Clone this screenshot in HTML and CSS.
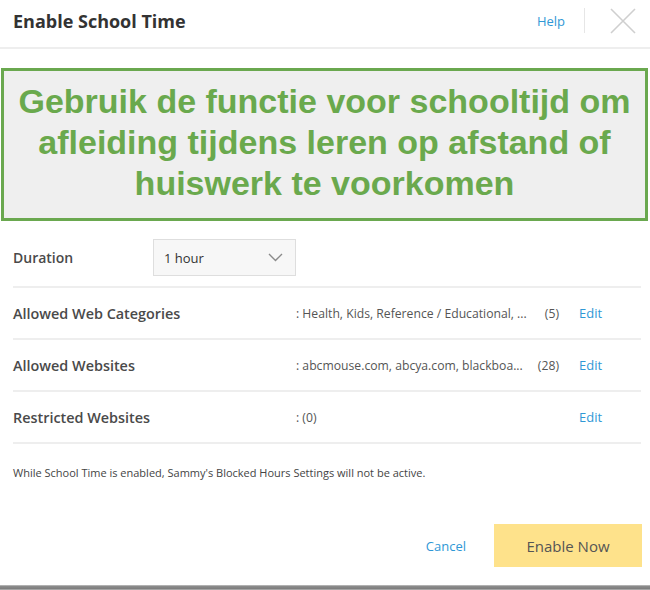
FILE: index.html
```html
<!DOCTYPE html>
<html lang="en">
<head>
    <meta charset="UTF-8">
    <meta name="viewport" content="width=device-width, initial-scale=1.0">
    <title>Enable School Time</title>
    <link rel="stylesheet" href="styles.css">
</head>
<body>
    <div class="dialog">
        <div class="dialog-header">
            <h1>Enable School Time</h1>
            <div class="header-actions">
                <a class="help" href="#">Help</a>
                <span class="sep"></span>
                <span class="close">
                    <svg width="26" height="26" viewBox="0 0 26 26"><path d="M1 1 L25 25 M25 1 L1 25" stroke="#cfcfcf" stroke-width="1.6" fill="none"/></svg>
                </span>
            </div>
        </div>

        <div class="callout">Gebruik de functie voor schooltijd om afleiding tijdens leren op afstand of huiswerk te voorkomen</div>

        <div class="settings">
            <div class="row duration-row">
                <span class="label">Duration</span>
                <div class="select">
                    <span>1 hour</span>
                    <svg width="15" height="9" viewBox="0 0 15 9"><path d="M1 1 L7.5 7.5 L14 1" stroke="#8a8a8a" stroke-width="1.4" fill="none"/></svg>
                </div>
            </div>
            <div class="row">
                <span class="label">Allowed Web Categories</span>
                <div class="value"><span>: Health, Kids, Reference / Educational, ...</span><span class="count">(5)</span></div>
                <a class="edit" href="#">Edit</a>
            </div>
            <div class="row">
                <span class="label">Allowed Websites</span>
                <div class="value"><span>: abcmouse.com, abcya.com, blackboa...</span><span class="count">(28)</span></div>
                <a class="edit" href="#">Edit</a>
            </div>
            <div class="row">
                <span class="label">Restricted Websites</span>
                <div class="value"><span>: (0)</span></div>
                <a class="edit" href="#">Edit</a>
            </div>
        </div>

        <p class="note">While School Time is enabled, Sammy's Blocked Hours Settings will not be active.</p>

        <div class="footer">
            <a class="cancel" href="#">Cancel</a>
            <div class="button">Enable Now</div>
        </div>
        <div class="bottom-bar"></div>
    </div>
</body>
</html>
```

FILE: styles.css
```css
body {
    font-family: "Open Sans", Arial, sans-serif;
    margin: 0;
    padding: 0;
    background: white;
    color: #444;
}
a {
    text-decoration: none;
    color: #2f98d6;
}
.dialog {
    width: 650px;
    height: 590px;
    overflow: hidden;
}
.dialog-header {
    height: 47px;
    border-bottom: 2px solid #eeeeee;
    display: flex;
    align-items: center;
    justify-content: space-between;
    padding-left: 13px;
}
.dialog-header h1 {
    margin: 0;
    font-size: 18px;
    font-weight: 700;
    color: #333;
    padding-bottom: 6px;
}
.header-actions {
    display: flex;
    align-items: center;
    padding-bottom: 6px;
}
.help {
    font-size: 13px;
    margin-right: 19px;
}
.sep {
    width: 1px;
    height: 25px;
    background: #e6e6e6;
    margin-right: 25px;
}
.close {
    width: 26px;
    height: 26px;
    margin-right: 14px;
}
.callout {
    margin: 19px 2px 0 1px;
    border: 3px solid #6aa84f;
    background: #efefef;
    color: #6aa94d;
    font-family: "Liberation Sans", Arial, sans-serif;
    font-weight: 700;
    font-size: 34px;
    line-height: 41px;
    text-align: center;
    padding: 10px 0 14px;
}
.settings {
    margin: 0 9px 0 13px;
}
.row {
    display: flex;
    align-items: center;
    height: 50px;
    border-bottom: 2px solid #eeeeee;
}
.duration-row {
    height: auto;
    padding: 18px 0 10px;
}
.label {
    width: 283px;
    flex: none;
    font-size: 14.4px;
    font-weight: 600;
    color: #4a4a4a;
}
.duration-row .label {
    width: 140px;
    font-size: 14px;
}
.select {
    width: 119px;
    height: 35px;
    border: 1px solid #dedede;
    background: #f7f7f7;
    display: flex;
    align-items: center;
    justify-content: space-between;
    padding: 0 12px 0 10px;
    font-size: 13px;
    color: #333;
}
.value {
    width: 263px;
    display: flex;
    justify-content: space-between;
    white-space: nowrap;
    font-size: 12.2px;
    color: #555;
}
.edit {
    margin-left: 20px;
    font-size: 13px;
}
.note {
    margin: 21px 0 0 13px;
    font-size: 11px;
    line-height: 16px;
    color: #444;
}
.footer {
    margin-top: 43px;
    display: flex;
    justify-content: flex-end;
    align-items: center;
    padding-right: 8px;
}
.cancel {
    font-size: 13px;
    margin-right: 28px;
}
.button {
    width: 148px;
    height: 43px;
    background: #fee28b;
    color: #555;
    font-size: 15px;
    display: flex;
    align-items: center;
    justify-content: center;
}
.bottom-bar {
    margin-top: 18px;
    height: 5px;
    background: linear-gradient(#c4c4c4, #8a8a8a 30%, #7f7f7f 70%, #b8b8b8);
}
```
